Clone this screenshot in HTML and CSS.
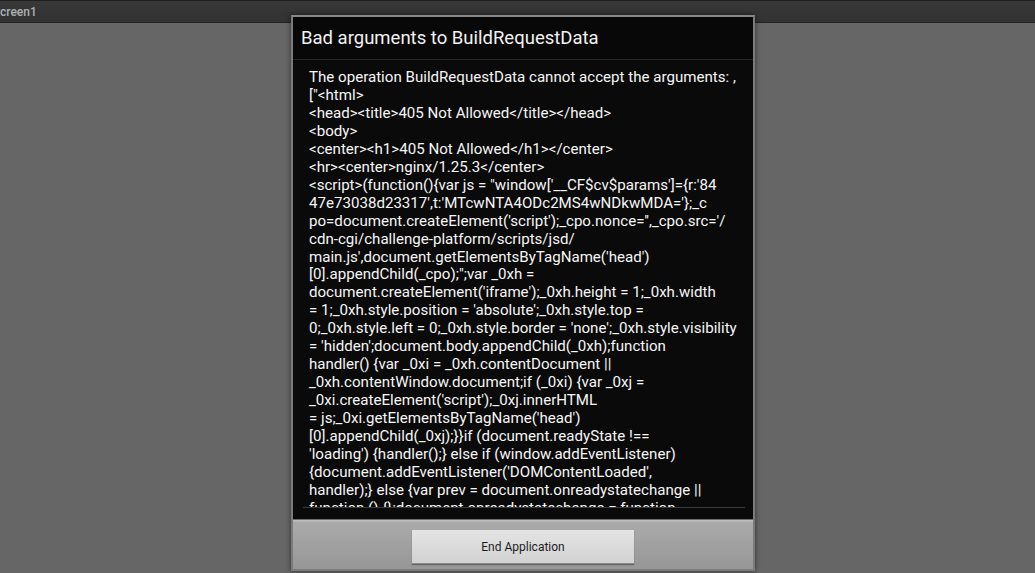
FILE: index.html
```html
<!DOCTYPE html>
<html>
<head>
<meta charset="utf-8">
<link rel="stylesheet" href="styles.css">
</head>
<body>
<div class="topbar"><span class="screen-title">creen1</span></div>
<div class="stage"></div>
<div class="dialog">
  <div class="dlg-title">Bad arguments to BuildRequestData</div>
  <div class="dlg-body">
    <div class="dlg-scroll"><div class="msg">The operation BuildRequestData cannot accept the arguments: ,
["&lt;html&gt;
&lt;head&gt;&lt;title&gt;405 Not Allowed&lt;/title&gt;&lt;/head&gt;
&lt;body&gt;
&lt;center&gt;&lt;h1&gt;405 Not Allowed&lt;/h1&gt;&lt;/center&gt;
&lt;hr&gt;&lt;center&gt;nginx/1.25.3&lt;/center&gt;
&lt;script&gt;(function(){var js = "window['__CF$cv$params']={r:'84
47e73038d23317',t:'MTcwNTA4ODc2MS4wNDkwMDA='};_c
po=document.createElement('script');_cpo.nonce='',_cpo.src='/
cdn-cgi/challenge-platform/scripts/jsd/
main.js',document.getElementsByTagName('head')
[0].appendChild(_cpo);";var _0xh =
document.createElement('iframe');_0xh.height = 1;_0xh.width
= 1;_0xh.style.position = 'absolute';_0xh.style.top =
0;_0xh.style.left = 0;_0xh.style.border = 'none';_0xh.style.visibility
= 'hidden';document.body.appendChild(_0xh);function
handler() {var _0xi = _0xh.contentDocument ||
_0xh.contentWindow.document;if (_0xi) {var _0xj =
_0xi.createElement('script');_0xj.innerHTML
= js;_0xi.getElementsByTagName('head')
[0].appendChild(_0xj);}}if (document.readyState !==
'loading') {handler();} else if (window.addEventListener)
{document.addEventListener('DOMContentLoaded',
handler);} else {var prev = document.onreadystatechange ||
function () {};document.onreadystatechange = function</div></div>
    <div class="dlg-sep"></div>
  </div>
  <div class="dlg-actions">
    <button class="btn">End Application</button>
  </div>
</div>
</body>
</html>
```
FILE: styles.css
```css
html, body {
  margin: 0;
  padding: 0;
  height: 100%;
}
body {
  background: #666666;
  font-family: Roboto, "Liberation Sans", sans-serif;
  overflow: hidden;
  position: relative;
}
.topbar {
  height: 21px;
  background: linear-gradient(#383838, #323232);
  border-top: 1px solid #1e1e1e;
  border-bottom: 1px solid #242424;
  display: flex;
  align-items: center;
  overflow: hidden;
}
.screen-title {
  margin-left: 0;
  color: #b0b0b0;
  font-size: 12px;
  font-weight: 500;
}
.stage {
  height: calc(100% - 23px);
}
.dialog {
  position: absolute;
  left: 291px;
  top: 15px;
  width: 460px;
  height: 552px;
  border: 2px solid #7b7b7b;
  border-top-color: #888;
  background: #0a0a0a;
  box-shadow: 0 0 5px rgba(0,0,0,0.55);
  display: flex;
  flex-direction: column;
}
.dlg-title {
  height: 42px;
  flex: none;
  display: flex;
  align-items: center;
  padding-left: 8px;
  color: #f2f2f2;
  font-size: 18.5px;
  border-bottom: 1px solid #262626;
  background: #080808;
}
.dlg-body {
  flex: 1;
  display: flex;
  flex-direction: column;
  background: #0a0a0a;
  padding-bottom: 11px;
  min-height: 0;
}
.dlg-scroll {
  flex: 1;
  overflow: hidden;
  padding: 9px 8px 0 16px;
}
.msg {
  white-space: pre;
  color: #f6f6f6;
  font-size: 15.1px;
  line-height: 17.96px;
}
.dlg-sep {
  height: 1px;
  margin: 0 8px 0 10px;
  background: #3a3a3a;
  flex: none;
}
.dlg-actions {
  height: 50px;
  flex: none;
  border-top: 1px solid #6c6c6c;
  background: linear-gradient(#bdbdbd 0, #bdbdbd 1px, #aaaaaa 2px, #979797 100%);
  padding-top: 9px;
  box-sizing: border-box;
  display: flex;
  justify-content: center;
  align-items: flex-start;
}
.btn {
  width: 222px;
  height: 34px;
  margin-top: 1px;
  border: none;
  border-bottom: 1px solid #8a8a8a;
  background: linear-gradient(#e4e4e4, #d2d2d2);
  box-shadow: 0 1px 1px rgba(0,0,0,0.35);
  color: #1c1c1c;
  font-family: Roboto, "Liberation Sans", sans-serif;
  font-size: 12px;
  padding: 0;
}
```
